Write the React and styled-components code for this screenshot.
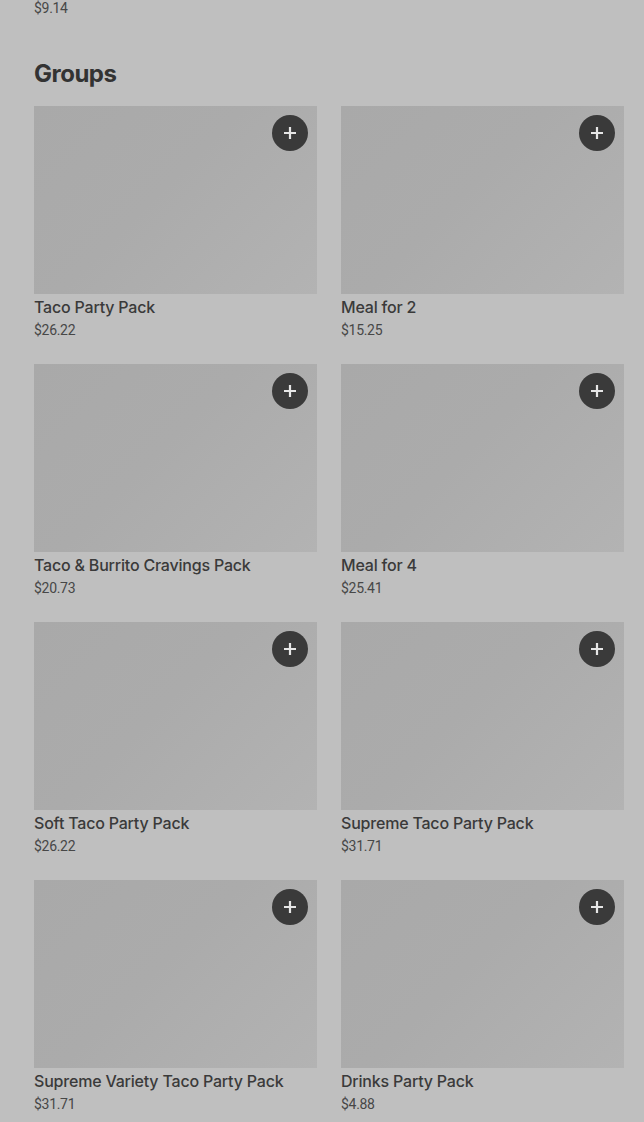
import React from "react";
import styled, { createGlobalStyle } from "styled-components";

const Global = createGlobalStyle`
  html, body { margin: 0; padding: 0; background: #bfbfbf; }
  body { font-family: Inter, "Noto Sans", "Liberation Sans", sans-serif; overflow: hidden; }
`;

const Page = styled.div`
  padding: 0 20px 0 34px;
  height: 1122px;
  overflow: hidden;
`;

const TopPrice = styled.div`
  margin-top: -2px;
  font-family: Roboto, "Liberation Sans", sans-serif;
  font-size: 14px;
  line-height: 20px;
  letter-spacing: -0.3px;
  color: #474747;
`;

const Heading = styled.h2`
  margin: 40px 0 16px;
  font-size: 24px;
  line-height: 32px;
  font-weight: 700;
  color: #333333;
  letter-spacing: -0.5px;
`;

const Grid = styled.div`
  display: grid;
  grid-template-columns: repeat(2, 283px);
  column-gap: 24px;
  row-gap: 24px;
`;

const Card = styled.div`
  display: flex;
  flex-direction: column;
`;

const Thumb = styled.div`
  position: relative;
  height: 188px;
  background: linear-gradient(135deg, #a9a9a9 0%, #ababab 45%, #b3b3b3 100%);
`;

const AddButton = styled.button`
  position: absolute;
  top: 9px;
  right: 9px;
  width: 36px;
  height: 36px;
  border-radius: 50%;
  border: none;
  padding: 0;
  background: #3a3a3a;
  display: flex;
  align-items: center;
  justify-content: center;
  cursor: pointer;
`;

const Title = styled.div`
  margin-top: 1px;
  font-size: 16px;
  line-height: 24px;
  font-weight: 500;
  letter-spacing: -0.2px;
  color: #3a3a3a;
`;

const Price = styled.div`
  margin-top: 1px;
  font-family: Roboto, "Liberation Sans", sans-serif;
  font-size: 14px;
  line-height: 20px;
  letter-spacing: -0.3px;
  color: #474747;
`;

const items = [
  ["Taco Party Pack", "$26.22"],
  ["Meal for 2", "$15.25"],
  ["Taco & Burrito Cravings Pack", "$20.73"],
  ["Meal for 4", "$25.41"],
  ["Soft Taco Party Pack", "$26.22"],
  ["Supreme Taco Party Pack", "$31.71"],
  ["Supreme Variety Taco Party Pack", "$31.71"],
  ["Drinks Party Pack", "$4.88"],
];

const Plus = () => (
  <svg width="14" height="14" viewBox="0 0 14 14">
    <path d="M7 1v12M1 7h12" stroke="#e6e6e6" strokeWidth="2.2" />
  </svg>
);

export default function App() {
  return (
    <>
      <Global />
      <Page>
        <TopPrice>$9.14</TopPrice>
        <Heading>Groups</Heading>
        <Grid>
          {items.map(([t, p]) => (
            <Card key={t}>
              <Thumb>
                <AddButton aria-label="Add">
                  <Plus />
                </AddButton>
              </Thumb>
              <Title>{t}</Title>
              <Price>{p}</Price>
            </Card>
          ))}
        </Grid>
      </Page>
    </>
  );
}
